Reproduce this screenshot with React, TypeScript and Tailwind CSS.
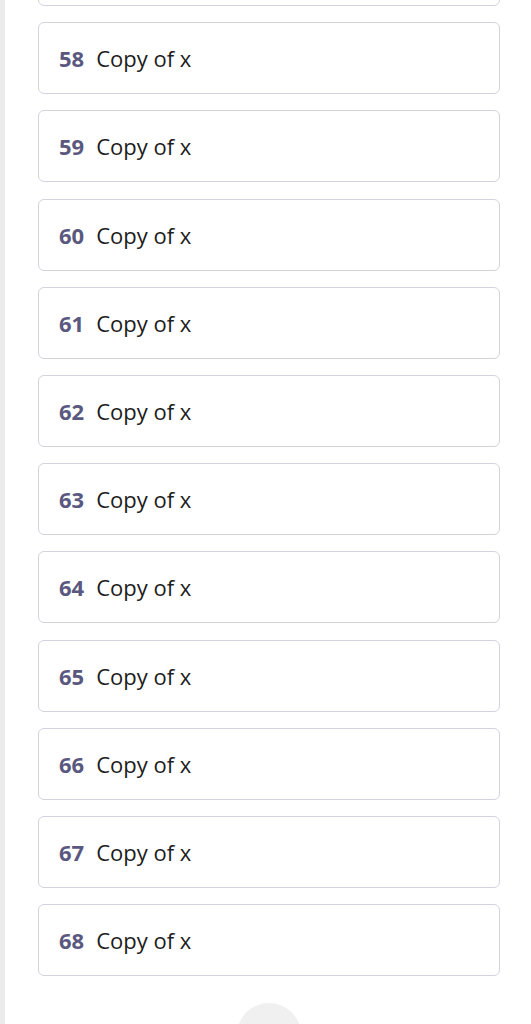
const items = Array.from({ length: 12 }, (_, i) => 57 + i)

export default function App() {
  return (
    <div className="flex h-screen overflow-hidden bg-white font-['Open_Sans',sans-serif]">
      <div className="w-[5px] shrink-0 bg-[#ebebeb]" />
      <div className="flex flex-1 flex-col pl-[33px] pr-[31px]">
        <div className="-mt-[66px] flex flex-col gap-[16.2px]">
          {items.map((n) => (
            <div
              key={n}
              className="flex h-[72px] items-center rounded-md border border-[#d3d2de] bg-white pl-[20px] pt-[1px]"
            >
              <span className="text-[22px] font-bold text-[#5b5880]">{n}</span>
              <span className="ml-[12px] text-[22px] text-[#1c1c1c]">Copy of x</span>
            </div>
          ))}
        </div>
        <div className="mt-[27px] flex justify-center">
          <div className="h-16 w-16 shrink-0 rounded-full bg-[#f0f0f0]" />
        </div>
      </div>
    </div>
  )
}
